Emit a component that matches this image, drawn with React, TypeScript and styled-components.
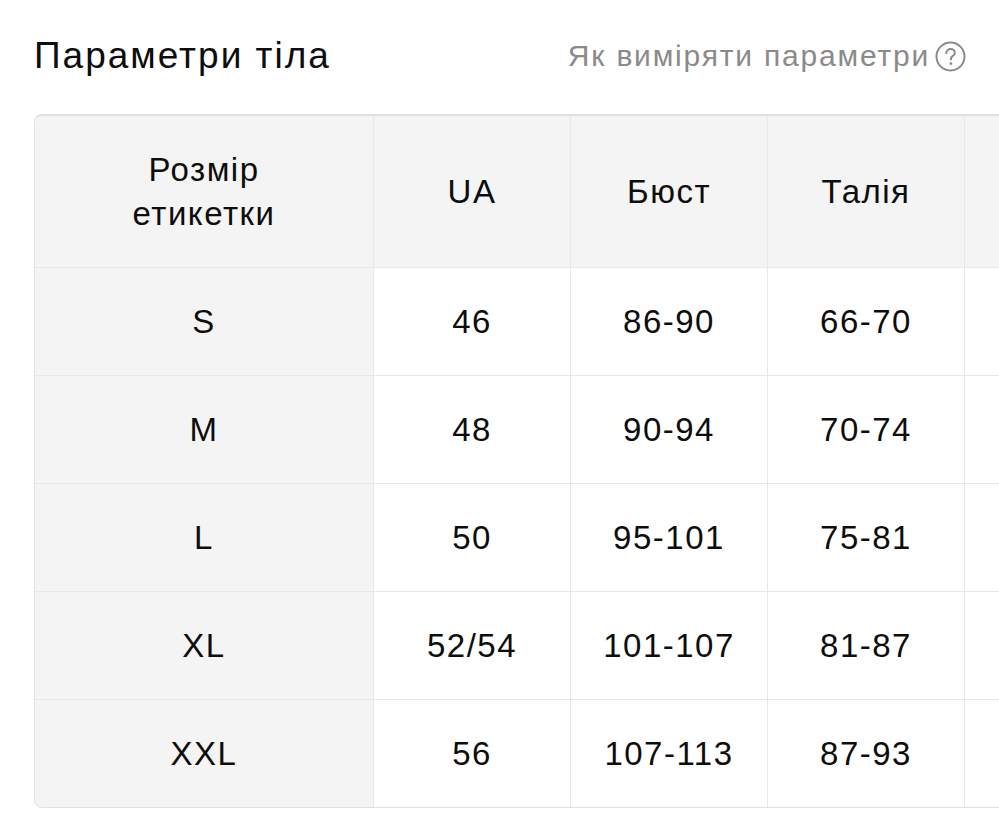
import styled, { createGlobalStyle } from "styled-components";

const GlobalStyle = createGlobalStyle`
  html, body {
    margin: 0;
    padding: 0;
    background: #ffffff;
    overflow: hidden;
  }
  body {
    font-family: "Liberation Sans", Arial, sans-serif;
    color: #111111;
  }
`;

const Page = styled.div`
  width: 999px;
  height: 823px;
  padding: 34px 0 0 34px;
  box-sizing: border-box;
  overflow: hidden;
`;

const TopBar = styled.div`
  display: flex;
  align-items: center;
  justify-content: space-between;
  width: 932px;
  height: 44px;
  margin-bottom: 36px;
`;

const Title = styled.h1`
  margin: 0;
  font-size: 37px;
  font-weight: 400;
  letter-spacing: 2px;
  color: #0d0d0d;
`;

const HowTo = styled.a`
  display: flex;
  align-items: center;
  gap: 5px;
  font-size: 30px;
  color: #8a8a8a;
  text-decoration: none;
  letter-spacing: 1.8px;
`;

const TableFrame = styled.div`
  width: 1040px;
  border: 1px solid #e0e0e0;
  border-top: 2px solid #e0e0e0;
  border-radius: 8px;
  overflow: hidden;
`;

const Grid = styled.div`
  display: grid;
  grid-template-columns: 339px repeat(5, 197px);
`;

const Cell = styled.div<{ $head?: boolean; $label?: boolean; $last?: boolean }>`
  display: flex;
  align-items: center;
  justify-content: center;
  text-align: center;
  height: ${(p) => (p.$head ? "151px" : "107px")};
  border-right: 1px solid #e8e8e8;
  border-bottom: ${(p) => (p.$last ? "none" : "1px solid #e8e8e8")};
  background: ${(p) => (p.$head || p.$label ? "#f4f4f4" : "#ffffff")};
  font-size: 33px;
  line-height: 44px;
  letter-spacing: 1.5px;
  color: #0d0d0d;
`;

const headers = ["Розмір етикетки", "UA", "Бюст", "Талія", "", ""];

const rows = [
  ["S", "46", "86-90", "66-70", "", ""],
  ["M", "48", "90-94", "70-74", "", ""],
  ["L", "50", "95-101", "75-81", "", ""],
  ["XL", "52/54", "101-107", "81-87", "", ""],
  ["XXL", "56", "107-113", "87-93", "", ""],
];

function QuestionIcon() {
  return (
    <svg width="31" height="31" viewBox="0 0 31 31" fill="none">
      <circle cx="15.5" cy="15.5" r="14" stroke="#8a8a8a" strokeWidth="2" />
      <path
        d="M11.3 12.2c0-2.5 1.9-4.2 4.3-4.2 2.4 0 4.2 1.6 4.2 3.8 0 1.7-.9 2.6-2.2 3.4-1.2.8-1.7 1.4-1.7 2.8v.6"
        stroke="#8a8a8a"
        strokeWidth="2"
        strokeLinecap="round"
      />
      <circle cx="15.9" cy="22.6" r="1.4" fill="#8a8a8a" />
    </svg>
  );
}

export default function App() {
  return (
    <Page>
      <GlobalStyle />
      <TopBar>
        <Title>Параметри тіла</Title>
        <HowTo href="#">
          Як виміряти параметри
          <QuestionIcon />
        </HowTo>
      </TopBar>
      <TableFrame>
        <Grid>
          {headers.map((h, i) => (
            <Cell key={i} $head>
              {i === 0 ? (
                <span>
                  Розмір
                  <br />
                  етикетки
                </span>
              ) : (
                h
              )}
            </Cell>
          ))}
          {rows.map((row, r) =>
            row.map((v, c) => (
              <Cell key={`${r}-${c}`} $label={c === 0} $last={r === rows.length - 1}>
                {v}
              </Cell>
            ))
          )}
        </Grid>
      </TableFrame>
    </Page>
  );
}
